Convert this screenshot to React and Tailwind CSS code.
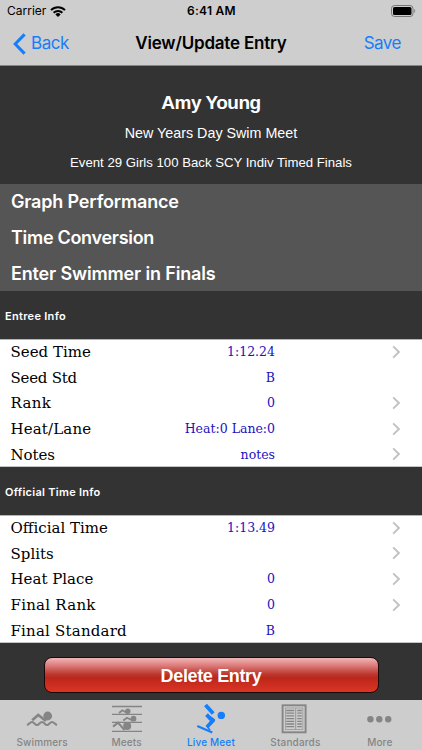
import React from "react";

const menu = [
  { label: "Graph Performance", cls: "tracking-[-0.17px]" },
  { label: "Time Conversion", cls: "tracking-[-0.3px]" },
  { label: "Enter Swimmer in Finals", cls: "tracking-[-0.16px]" },
];

const entryRows = [
  { label: "Seed Time", cls: "tracking-[0px]", value: "1:12.24", arrow: true },
  { label: "Seed Std", cls: "tracking-[-0.25px]", value: "B", arrow: false },
  { label: "Rank", cls: "tracking-[0.3px]", value: "0", arrow: true },
  { label: "Heat/Lane", cls: "tracking-[0.15px]", value: "Heat:0 Lane:0", arrow: true },
  { label: "Notes", cls: "tracking-[-0.1px]", value: "notes", arrow: true },
];

const officialRows = [
  { label: "Official Time", cls: "tracking-[0px]", value: "1:13.49", arrow: true },
  { label: "Splits", cls: "tracking-[0px]", value: "", arrow: true },
  { label: "Heat Place", cls: "tracking-[0px]", value: "0", arrow: true },
  { label: "Final Rank", cls: "tracking-[0.25px]", value: "0", arrow: true },
  { label: "Final Standard", cls: "tracking-[0.2px]", value: "B", arrow: false },
];

function Chevron() {
  return (
    <svg className="h-[14px] w-[9px]" viewBox="0 0 9 14" fill="none" stroke="#c2c2c4" strokeWidth="2">
      <path d="M1.2 1.4 6.9 7 1.2 12.6" />
    </svg>
  );
}

function Rows({ rows }) {
  return (
    <div className="flex h-[128px] shrink-0 flex-col bg-white font-['DejaVu_Serif',serif] shadow-[inset_0_1px_0_#b5b5b5,inset_0_-1px_0_#c5c5c5]">
      {rows.map((r) => (
        <div key={r.label} className="flex min-h-0 flex-1 items-center whitespace-nowrap pl-[10.5px] pr-[21px]">
          <span className="w-[134.5px] pt-[2px] text-[15px] leading-none text-black">
            <span className={r.cls}>{r.label}</span>
          </span>
          <span className="w-[130px] pt-[1.5px] text-right text-[12.5px] leading-none text-[#1c12c0]">{r.value}</span>
          <span className="ml-auto">{r.arrow && <Chevron />}</span>
        </div>
      ))}
    </div>
  );
}

function SwimmersIcon() {
  return (
    <svg className="h-[32px] w-[32px]" viewBox="0 0 32 32" fill="none" stroke="#858585" strokeWidth="2">
      <circle cx="21.7" cy="13" r="4.4" fill="#858585" stroke="none" />
      <path d="M6.2 17.2 12.2 12 20 18" strokeWidth="2.6" />
      <path d="M1 22 C3.5 21 4 18.9 6 18.9 S9 22 11 22 S14 18.9 16 18.9 S19 22 21 22 S24 18.9 26 18.9 S28.5 21 31 22" strokeWidth="2" />
    </svg>
  );
}

function MeetsIcon() {
  return (
    <svg className="h-[32px] w-[32px]" viewBox="0 0 32 32" fill="none" stroke="#858585" strokeWidth="1.3">
      <path d="M1 3.5h30M1 11.3h30M1 19.3h30M1 28.3h30" />
      <circle cx="16.8" cy="8.3" r="2.7" fill="#858585" stroke="none" />
      <path d="M8 10 11.3 7.3 16 10" strokeWidth="1.7" />
      <circle cx="22.5" cy="15.7" r="2.9" fill="#858585" stroke="none" />
      <path d="M12.3 17.5 16 14.7 21.5 17.5" strokeWidth="1.8" />
      <circle cx="16.2" cy="23" r="4" fill="#858585" stroke="none" />
      <path d="M2 23.6 7 19.7 13.5 27" strokeWidth="2" />
    </svg>
  );
}

function DiveIcon() {
  return (
    <svg className="h-[32px] w-[32px]" viewBox="0 0 32 32" fill="none" stroke="#147efb">
      <path d="M10.5 2 18.2 10.6" strokeWidth="3.8" />
      <path d="M11.5 11.6 L15.3 15.6 L18.3 17.3 L12 24" strokeWidth="3.8" strokeLinejoin="round" />
      <path d="M15.5 13.5 19.5 16.5 15 21.5Z" fill="#147efb" strokeWidth="1" />
      <path d="M11.5 22.5 15 27.2" strokeWidth="1.6" />
      <path d="M2.3 23 17.3 29.5" strokeWidth="2.1" />
      <circle cx="26.3" cy="12.4" r="3.7" fill="#147efb" stroke="none" />
    </svg>
  );
}

function StandardsIcon() {
  return (
    <svg className="h-[32px] w-[32px]" viewBox="0 0 32 32" fill="none" stroke="#858585">
      <rect x="3.6" y="2.3" width="23" height="27" strokeWidth="1.9" />
      <rect x="6.3" y="5" width="17.6" height="21.6" strokeWidth="0.6" />
      <path d="M7.2 7.5h8M7.2 10.2h8M7.2 12.9h8M7.2 15.6h8M7.2 18.3h8M7.2 21h8M7.2 23.7h8M18.3 7.5h4.5M18.3 10.2h4.5M18.3 12.9h4.5M18.3 15.6h4.5M18.3 18.3h4.5M18.3 21h4.5M18.3 23.7h4.5" strokeWidth="1.3" />
      <path d="M16.7 5.5v20.5" strokeWidth="0.8" />
    </svg>
  );
}

function MoreIcon() {
  return (
    <svg className="h-[32px] w-[32px]" viewBox="0 0 32 32" fill="#858585">
      <circle cx="6.4" cy="16.2" r="3.2" />
      <circle cx="15.3" cy="16.2" r="3.2" />
      <circle cx="24.2" cy="16.2" r="3.2" />
    </svg>
  );
}

const tabs = [
  { label: "Swimmers", Icon: SwimmersIcon },
  { label: "Meets", Icon: MeetsIcon },
  { label: "Live Meet", Icon: DiveIcon, active: true },
  { label: "Standards", Icon: StandardsIcon },
  { label: "More", Icon: MoreIcon },
];

export default function App() {
  return (
    <div className="flex h-[750px] w-[422px] flex-col overflow-hidden whitespace-nowrap bg-[#333333] font-['Inter','Liberation_Sans',sans-serif]">
      <header className="h-[66px] shrink-0 border-b border-[#858585] bg-[#cecece]">
        <div className="grid h-[22px] grid-cols-3 items-center pl-[7px] pr-[6px] text-[12px] leading-none text-black">
          <div className="flex items-center gap-[4px]">
            <span>Carrier</span>
            <svg className="h-[11px] w-[16px]" viewBox="0 0 16 11" fill="none" stroke="#000">
              <path d="M1 4.1a10 10 0 0 1 14 0" strokeWidth="2" />
              <path d="M3.6 6.8a6.3 6.3 0 0 1 8.8 0" strokeWidth="1.9" />
              <path d="M8 11 5.4 8.4a3.7 3.7 0 0 1 5.2 0z" fill="#000" stroke="none" />
            </svg>
          </div>
          <span className="text-center font-semibold tracking-[0.25px]">6:41 AM</span>
          <svg className="h-[12px] w-[25px] justify-self-end" viewBox="0 0 25 12" fill="none">
            <rect x="0.5" y="0.5" width="21.5" height="11" rx="3" stroke="#777" />
            <rect x="2" y="2" width="18.5" height="8" rx="1.5" fill="#000" />
            <path d="M23.3 4v4c1.3-.5 1.3-3.5 0-4z" fill="#777" />
          </svg>
        </div>
        <div className="grid h-[43px] grid-cols-[90px_1fr_90px] items-center text-[17px] leading-none">
          <div className="flex items-center gap-[5px] pl-[13px] text-[#147efb]">
            <svg className="h-[22px] w-[13px]" viewBox="0 0 13 22" fill="none" stroke="#147efb" strokeWidth="3">
              <path d="M11.6 1.4 2.2 11l9.4 9.6" />
            </svg>
            <span className="tracking-[-0.45px]">Back</span>
          </div>
          <h1 className="text-center font-semibold tracking-[-0.2px] text-black">View/Update Entry</h1>
          <span className="pr-[21px] text-right tracking-[-0.5px] text-[#147efb]">Save</span>
        </div>
      </header>

      <section className="flex h-[118px] shrink-0 flex-col items-center pt-[27px] font-['Liberation_Sans',sans-serif] text-white">
        <h2 className="text-[19px] font-bold leading-[20px] tracking-[-0.5px]">Amy Young</h2>
        <p className="mt-[12px] text-[14.3px] leading-[16px]">New Years Day Swim Meet</p>
        <p className="mt-[14px] text-[13.2px] leading-[15px]">Event 29 Girls 100 Back SCY Indiv Timed Finals</p>
      </section>

      <nav className="flex h-[107px] shrink-0 flex-col bg-[#555555]">
        {menu.map((m) => (
          <div key={m.label} className="flex flex-1 items-center pl-[11px] pt-px text-[18px] font-semibold leading-none text-white">
            <span className={m.cls}>{m.label}</span>
          </div>
        ))}
      </nav>

      <div className="flex h-[48px] shrink-0 items-center pl-[5px] pt-[2px] text-[11px] font-semibold leading-none tracking-[0.3px] text-white">Entree Info</div>
      <Rows rows={entryRows} />
      <div className="flex h-[48px] shrink-0 items-center pl-[5px] pt-[2px] text-[11px] font-semibold leading-none tracking-[0.28px] text-white">Official Time Info</div>
      <Rows rows={officialRows} />

      <div className="flex h-[57px] shrink-0 justify-center pt-[14px]">
        <button className="h-[36px] w-[335px] rounded-[8px] border border-[#1b0808] bg-[linear-gradient(180deg,#f0b5b5_0%,#dc7c7b_22%,#bd3930_47%,#bb271a_58%,#dc3525_100%)] pt-[2px] font-['Liberation_Sans',sans-serif] text-[18px] font-bold leading-none tracking-[-0.35px] text-white">Delete Entry</button>
      </div>

      <footer className="grid h-[50px] shrink-0 grid-cols-5 bg-[#cdcdcd]">
        {tabs.map(({ label, Icon, active }) => (
          <div key={label} className={active ? "flex flex-col items-center pt-[3px] text-[#147efb]" : "flex flex-col items-center pt-[3px] text-[#858585]"}>
            <Icon />
            <span className="mt-[2px] text-[10px] font-medium leading-[11px] tracking-[0.15px]">{label}</span>
          </div>
        ))}
      </footer>
    </div>
  );
}
